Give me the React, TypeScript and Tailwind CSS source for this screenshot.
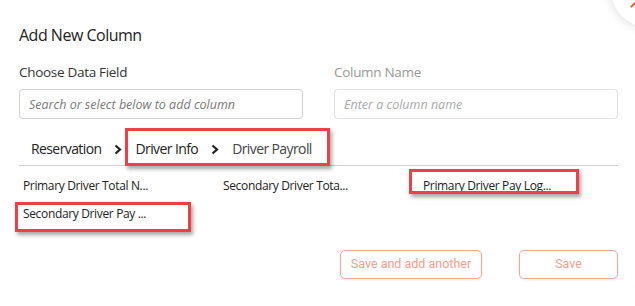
import React from 'react';

const fields = [
  'Primary Driver Total N...',
  'Secondary Driver Tota...',
  'Primary Driver Pay Log...',
  'Secondary Driver Pay ...',
];

// red annotation rectangles drawn over the screenshot
function Marker({ className }: { className: string }) {
  return (
    <div
      className={`absolute border-[3px] border-[#ec4149] shadow-[2px_3px_4px_rgba(0,0,0,0.35)] pointer-events-none ${className}`}
    />
  );
}

function Chevron() {
  return (
    <svg width="8" height="11" viewBox="0 0 8 11" className="mx-[13px] mt-[1px]">
      <path d="M1.5 1.5 L6 5.5 L1.5 9.5" fill="none" stroke="#222" strokeWidth="2.2" />
    </svg>
  );
}

export default function App() {
  return (
    <div className="relative w-[635px] h-[306px] overflow-hidden bg-white font-['Open_Sans',sans-serif] text-[#222]">
      {/* close button, mostly off-screen */}
      <div className="absolute left-[611px] top-[-47px] w-[74px] h-[74px] rounded-full bg-white shadow-[0_0_12px_rgba(0,0,0,0.15)]">
        <div className="absolute left-[21px] top-[49px] w-[2px] h-[6px] bg-[#f05a28] rotate-45" />
      </div>

      <div className="pl-[19px] pr-[17px] pt-[24px]">
        <h1 className="text-[16px] leading-[22px] tracking-[-0.5px] text-[#222]">Add New Column</h1>

        <div className="mt-[16px] grid grid-cols-2 gap-[31px]">
          <div>
            <div className="text-[13.5px] leading-[20px] tracking-[-0.3px] text-[#333]">Choose Data Field</div>
            <input
              placeholder="Search or select below to add column"
              className="mt-[7px] w-full h-[30px] px-[9px] rounded-[4px] border border-[#d0d0d0] text-[12.5px] italic placeholder:text-[#777] outline-none"
            />
          </div>
          <div>
            <div className="text-[13.5px] leading-[20px] tracking-[-0.3px] text-[#999]">Column Name</div>
            <input
              placeholder="Enter a column name"
              className="mt-[7px] w-full h-[30px] px-[9px] rounded-[4px] border border-[#e0e0e0] text-[12.5px] italic placeholder:text-[#aaa] outline-none"
            />
          </div>
        </div>

        {/* breadcrumb */}
        <div className="mt-[20px] pb-[6px] pl-[12px] border-b border-[#cfcfcf] flex items-center text-[14px] leading-[20px] tracking-[-0.6px]">
          <span className="text-[#222]">Reservation</span>
          <Chevron />
          <span className="text-[#222]">Driver Info</span>
          <Chevron />
          <span className="text-[#444]">Driver Payroll</span>
        </div>

        {/* field list */}
        <div className="pt-[10px] pl-[4px] grid grid-cols-[200px_200px_200px] gap-y-[8px] text-[12px] leading-[20px] tracking-[-0.35px] text-[#222]">
          {fields.map((f) => (
            <div key={f} className="whitespace-nowrap">{f}</div>
          ))}
        </div>

        {/* actions */}
        <div className="mt-[26px] flex justify-end gap-[37px] font-['Roboto',sans-serif]">
          <button className="w-[142px] h-[29px] rounded-[5px] border border-[#f6a593] text-[#f4a08e] text-[12.5px] shadow-[0_1px_3px_rgba(0,0,0,0.08)]">
            Save and add another
          </button>
          <button className="w-[99px] h-[29px] rounded-[5px] border border-[#f6a593] text-[#f4a08e] text-[12.5px] shadow-[0_1px_3px_rgba(0,0,0,0.08)]">
            Save
          </button>
        </div>
      </div>

      <Marker className="left-[125px] top-[128px] w-[205px] h-[38px]" />
      <Marker className="left-[409px] top-[169px] w-[170px] h-[25px]" />
      <Marker className="left-[15px] top-[202px] w-[176px] h-[30px]" />
    </div>
  );
}
